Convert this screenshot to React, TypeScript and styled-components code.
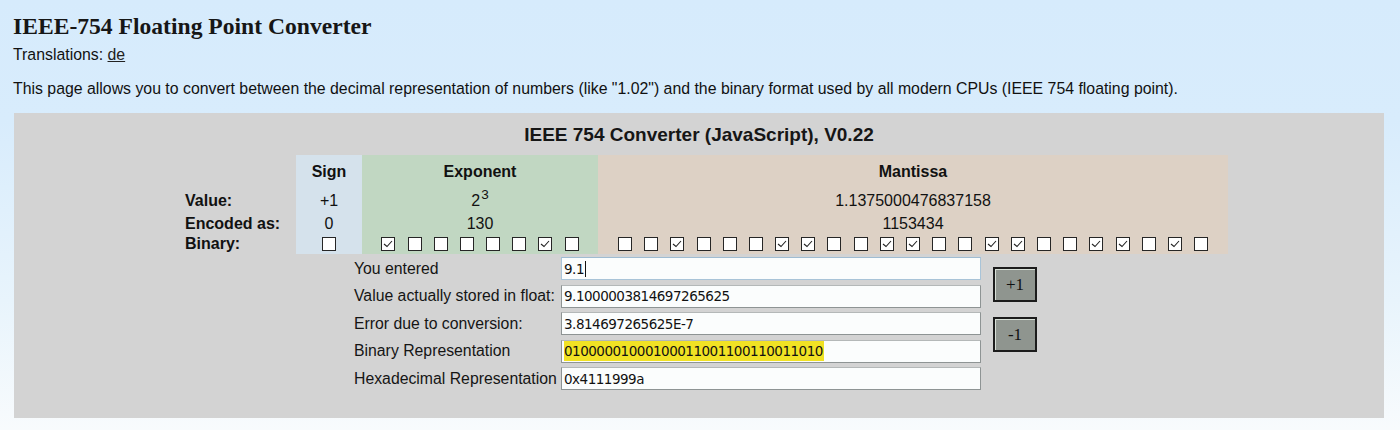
import styled, { createGlobalStyle } from 'styled-components';

const GlobalStyle = createGlobalStyle`
  html, body {
    margin: 0;
    padding: 0;
  }
  body {
    min-height: 430px;
    background: linear-gradient(to bottom, #d6ebfc 0px, #d8ecfc 120px, #e8f4fc 300px, #f8fbfd 430px);
    font-family: "Liberation Sans", Arial, sans-serif;
    color: #111;
  }
`

const Pagina = styled.div`
  padding: 0 16px 12px 13px;
`
const Titulo = styled.h1`
  margin: 0;
  padding-top: 12px;
  font-family: "Liberation Serif", "Times New Roman", serif;
  font-size: 23.6px;
  line-height: 28px;
  color: #161616;
`
const Traducoes = styled.p`
  margin: 6px 0 0;
  font-size: 15.85px;
  line-height: 18px;
  a {
    color: #222;
    text-decoration: underline;
  }
`
const Descricao = styled.p`
  margin: 16px 0 0;
  font-size: 15.85px;
  line-height: 18px;
`
const Painel = styled.section`
  margin: 15px 0 0 1px;
  height: 305px;
  background: #d3d3d3;
  padding-top: 11px;
  box-sizing: border-box;
`
const TituloPainel = styled.h2`
  margin: 0;
  text-align: center;
  font-size: 19px;
  line-height: 22px;
  font-weight: bold;
  color: #161616;
`
const Tabela = styled.div`
  display: flex;
  margin: 9px 0 0 169px;
  font-size: 16px;
`
const Coluna = styled.div<{ $tint?: string; $width: number; $align?: string }>`
  width: ${p => p.$width}px;
  background: ${p => p.$tint || 'transparent'};
  display: flex;
  flex-direction: column;
  align-items: ${p => p.$align || 'center'};
`
const Cabecalho = styled.div`
  height: 33px;
  display: flex;
  align-items: center;
  font-weight: bold;
`
const Celula = styled.div<{ $h: number; $bold?: boolean }>`
  height: ${p => p.$h}px;
  display: flex;
  align-items: center;
  padding: 0 2px;
  font-weight: ${p => (p.$bold ? 'bold' : 'normal')};
  sup {
    font-size: 13.5px;
    line-height: 0;
    position: relative;
    top: -6px;
    margin-left: 1px;
  }
`
const Bits = styled.div`
  height: 20px;
  display: flex;
  justify-content: center;
  align-items: center;
`
const CaixaBit = styled.span`
  width: 26.2px;
  display: flex;
  justify-content: center;
`
const Caixa = styled.span<{ $on: boolean }>`
  width: 12px;
  height: 12px;
  border: 1px solid #262626;
  background: #fff;
  display: inline-flex;
  align-items: center;
  justify-content: center;
`
const Formulario = styled.div`
  display: flex;
  margin: 3px 0 0 340px;
  gap: 12px;
`
const Campos = styled.div`
  display: grid;
  grid-template-columns: 207px 420px;
  row-gap: 4.5px;
  align-items: center;
`
const Rotulo = styled.label`
  font-size: 15.8px;
  color: #151515;
`
const Campo = styled.div<{ $focused?: boolean }>`
  height: 23px;
  box-sizing: border-box;
  border: 1px solid ${p => (p.$focused ? '#a9c4d8' : '#8e9494')};
  border-top-color: ${p => (p.$focused ? '#9fbcd2' : '#b4b8b8')};
  background: #fbfdfd;
  display: flex;
  align-items: center;
  padding-left: 2px;
  font-family: "DejaVu Sans", Verdana, sans-serif;
  font-size: 13.5px;
  letter-spacing: -0.5px;
  color: #111;
`
const Destaque = styled.span`
  background: #f1e224;
  padding: 2px 1px 2px 0;
`
const Cursor = styled.span`
  display: inline-block;
  width: 1px;
  height: 16px;
  background: #111;
  margin-left: 1px;
`
const Botoes = styled.div`
  display: flex;
  flex-direction: column;
  gap: 15px;
  padding-top: 10px;
`
const Botao = styled.button`
  width: 44px;
  height: 35px;
  background: #8f958f;
  border: 2px solid #1c1c1c;
  box-shadow: inset 1px 1px 0 #d8e0d8;
  font-family: "Liberation Serif", "Times New Roman", serif;
  font-size: 17px;
  color: #111;
  padding: 0;
`

function Check() {
  return (
    <svg width="10" height="8" viewBox="0 0 10 8">
      <path d="M1 4 L4 6.5 L9 1" fill="none" stroke="#222" strokeWidth="1.1" />
    </svg>
  )
}

function LinhaBits({ bits }: { bits: string }) {
  return (
    <Bits>
      {bits.split('').map((b, i) => (
        <CaixaBit key={i}>
          <Caixa $on={b === '1'}>{b === '1' && <Check />}</Caixa>
        </CaixaBit>
      ))}
    </Bits>
  )
}

const linhas = [
  { rotulo: 'You entered', valor: '9.1', focado: true },
  { rotulo: 'Value actually stored in float:', valor: '9.1000003814697265625' },
  { rotulo: 'Error due to conversion:', valor: '3.814697265625E-7' },
  { rotulo: 'Binary Representation', valor: '01000001000100011001100110011010', destaque: true },
  { rotulo: 'Hexadecimal Representation', valor: '0x4111999a' },
]

export default function App() {
  return (
    <>
      <GlobalStyle />
      <Pagina>
        <Titulo>IEEE-754 Floating Point Converter</Titulo>
        <Traducoes>Translations: <a href="#">de</a></Traducoes>
        <Descricao>
          This page allows you to convert between the decimal representation of numbers (like "1.02") and the binary format used by all modern CPUs (IEEE 754 floating point).
        </Descricao>
        <Painel>
          <TituloPainel>IEEE 754 Converter (JavaScript), V0.22</TituloPainel>
          <Tabela>
            <Coluna $width={113} $align="flex-start">
              <Cabecalho />
              <Celula $h={25} $bold>Value:</Celula>
              <Celula $h={21} $bold>Encoded as:</Celula>
              <Celula $h={20} $bold>Binary:</Celula>
            </Coluna>
            <Coluna $width={66} $tint="#d5e2ec">
              <Cabecalho>Sign</Cabecalho>
              <Celula $h={25}>+1</Celula>
              <Celula $h={21}>0</Celula>
              <LinhaBits bits="0" />
            </Coluna>
            <Coluna $width={236} $tint="#c1d7c2">
              <Cabecalho>Exponent</Cabecalho>
              <Celula $h={25}>2<sup>3</sup></Celula>
              <Celula $h={21}>130</Celula>
              <LinhaBits bits="10000010" />
            </Coluna>
            <Coluna $width={630} $tint="#ddd1c5">
              <Cabecalho>Mantissa</Cabecalho>
              <Celula $h={25}>1.1375000476837158</Celula>
              <Celula $h={21}>1153434</Celula>
              <LinhaBits bits="00100011001100110011010" />
            </Coluna>
          </Tabela>
          <Formulario>
            <Campos>
              {linhas.map(l => (
                <>
                  <Rotulo key={l.rotulo}>{l.rotulo}</Rotulo>
                  <Campo $focused={l.focado}>
                    {l.destaque ? <Destaque>{l.valor}</Destaque> : l.valor}
                    {l.focado && <Cursor />}
                  </Campo>
                </>
              ))}
            </Campos>
            <Botoes>
              <Botao>+1</Botao>
              <Botao>-1</Botao>
            </Botoes>
          </Formulario>
        </Painel>
      </Pagina>
    </>
  )
}
